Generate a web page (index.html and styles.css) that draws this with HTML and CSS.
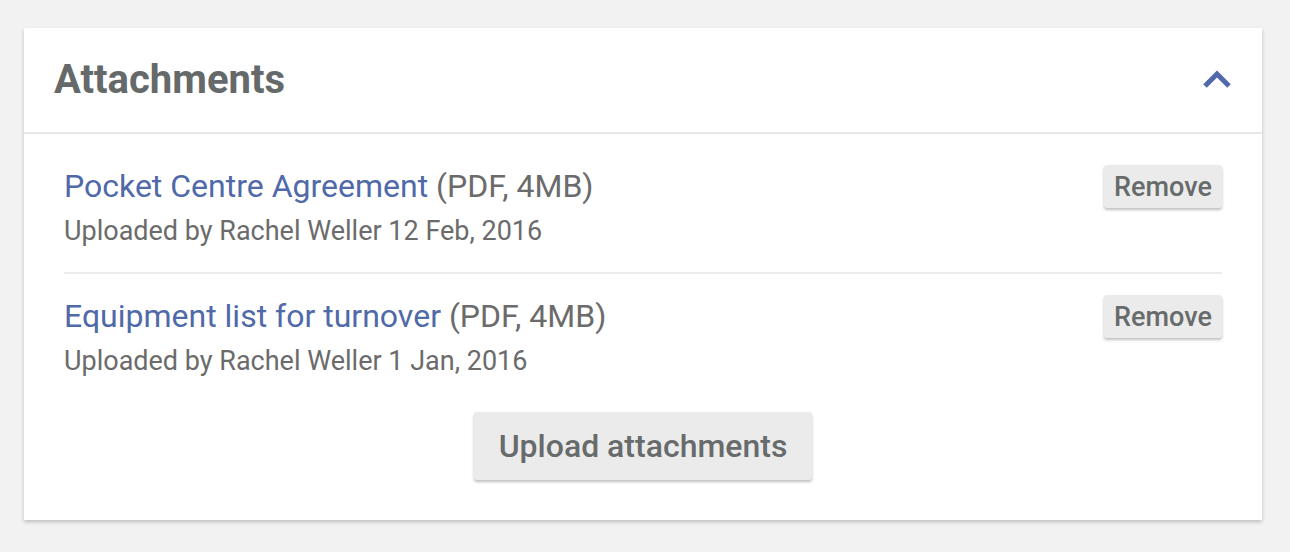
FILE: index.html
```html
<!DOCTYPE html>
<html>
<head>
<meta charset="utf-8">
<link rel="stylesheet" href="styles.css">
</head>
<body>
<div class="card">
  <div class="card-header">
    <h2 class="card-title">Attachments</h2>
    <button class="collapse" aria-label="Collapse">
      <svg width="30" height="20" viewBox="0 0 30 20"><path d="M3 16 L15 4 L27 16" fill="none" stroke="#5069a8" stroke-width="5"/></svg>
    </button>
  </div>
  <div class="card-body">
    <div class="attachment">
      <div class="info">
        <div class="name"><a href="#">Pocket Centre Agreement</a> (PDF, 4MB)</div>
        <div class="meta">Uploaded by Rachel Weller 12 Feb, 2016</div>
      </div>
      <button class="btn btn-small">Remove</button>
    </div>
    <div class="attachment last">
      <div class="info">
        <div class="name"><a href="#">Equipment list for turnover</a> (PDF, 4MB)</div>
        <div class="meta">Uploaded by Rachel Weller 1 Jan, 2016</div>
      </div>
      <button class="btn btn-small">Remove</button>
    </div>
    <div class="actions">
      <button class="btn btn-large">Upload attachments</button>
    </div>
  </div>
</div>
</body>
</html>
```
FILE: styles.css
```css
* { box-sizing: border-box; }
body {
  margin: 0;
  background: #f2f2f2;
  padding: 28px 28px 32px 24px;
  font-family: Roboto, "Liberation Sans", sans-serif;
}
.card {
  width: 1238px;
  background: #fff;
  box-shadow: 0 2px 4px rgba(0,0,0,0.22);
}
.card-header {
  height: 106px;
  padding: 0 30px 0 30px;
  display: flex;
  align-items: center;
  justify-content: space-between;
  border-bottom: 2px solid #e8e8e8;
}
.card-title {
  margin: 0;
  font-size: 40px;
  line-height: 48px;
  font-weight: 700;
  color: #656969;
}
.collapse {
  border: 0;
  background: none;
  padding: 0;
  width: 30px;
  height: 20px;
  display: block;
}
.collapse svg { display: block; }
.card-body {
  padding: 10px 40px 40px 40px;
}
.attachment {
  display: flex;
  justify-content: space-between;
  align-items: flex-start;
  padding: 22px 0 24px;
  border-bottom: 2px solid #ececec;
}
.attachment.last { border-bottom: 0; padding-bottom: 0; }
.name {
  font-size: 32px;
  line-height: 40px;
  color: #6b6b6b;
}
.name a { color: #5069a8; text-decoration: none; }
.meta {
  font-size: 27px;
  line-height: 34px;
  margin-top: 8px;
  color: #6b6b6b;
}
.btn {
  font-family: Roboto, "Liberation Sans", sans-serif;
  font-weight: 500;
  background: #ebebeb;
  color: #676b6b;
  border: 0;
  border-radius: 3px;
  box-shadow: 0 2px 3px rgba(0,0,0,0.25);
  padding: 0;
}
.btn-small {
  width: 118px;
  height: 43px;
  font-size: 27px;
  margin-top: -1px;
}
.actions {
  display: flex;
  justify-content: center;
  padding-top: 34px;
}
.btn-large {
  width: 338px;
  height: 68px;
  font-size: 32px;
}
```
